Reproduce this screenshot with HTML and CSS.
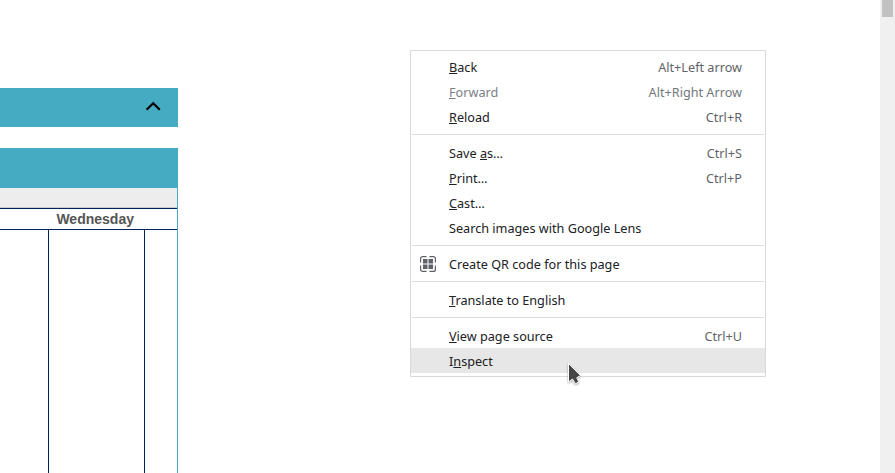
FILE: index.html
```html
<!DOCTYPE html>
<html lang="en">
<head>
<meta charset="utf-8">
<title>Calendar</title>
<link rel="stylesheet" href="styles.css">
</head>
<body>
<main class="page">
  <section class="calendar">
    <div class="filter-bar">
      <svg class="chevron" width="16" height="11" viewBox="0 0 16 11"><path d="M1.6 8.800 8.200 2.200 14.800 8.800" fill="none" stroke="#000" stroke-width="2.2"/></svg>
    </div>
    <div class="title-bar"></div>
    <div class="grid">
      <div class="subhead"></div>
      <div class="day-head"><span class="day">Wednesday</span></div>
      <div class="cells"><div class="cell first"></div><div class="cell mid"></div><div class="cell last"></div></div>
    </div>
  </section>
</main>
<aside class="scrollbar"><div class="thumb"></div></aside>

<nav class="menu">
  <div class="item"><span class="label"><u>B</u>ack</span><span class="key">Alt+Left arrow</span></div>
  <div class="item disabled"><span class="label"><u>F</u>orward</span><span class="key">Alt+Right Arrow</span></div>
  <div class="item"><span class="label"><u>R</u>eload</span><span class="key">Ctrl+R</span></div>
  <div class="sep"></div>
  <div class="item"><span class="label">Save <u>a</u>s…</span><span class="key">Ctrl+S</span></div>
  <div class="item"><span class="label"><u>P</u>rint…</span><span class="key">Ctrl+P</span></div>
  <div class="item"><span class="label"><u>C</u>ast…</span></div>
  <div class="item"><span class="label">Search images with Google Lens</span></div>
  <div class="sep"></div>
  <div class="item">
    <svg class="icon" width="16" height="16" viewBox="0 0 16 16"><path d="M.6 6.500V2.600a2 2 0 0 1 2-2H6.500M9.500 .6h3.900a2 2 0 0 1 2 2V6.500M15.400 9.500v3.900a2 2 0 0 1-2 2H9.500M6.500 15.400H2.600a2 2 0 0 1-2-2V9.500" fill="none" stroke="#5f6368" stroke-width="1.200"/><path d="M3 3h4.500v4.500H3zM8.500 3H13v4.500H8.500zM3 8.500h4.500V13H3zM8.500 8.500H13V13H8.500z" fill="#5f6368"/></svg>
    <span class="label">Create QR code for this page</span>
  </div>
  <div class="sep"></div>
  <div class="item"><span class="label"><u>T</u>ranslate to English</span></div>
  <div class="sep"></div>
  <div class="item"><span class="label"><u>V</u>iew page source</span><span class="key">Ctrl+U</span></div>
  <div class="item active"><span class="label">I<u>n</u>spect</span></div>
</nav>
<svg class="cursor" width="18" height="26" viewBox="0 0 18 26"><path d="M2.500 2.500v18.500l4-3 3 4.800 3.300-1.900-2-4.200 3.700-2.200z" fill="#454545" stroke="#fff" stroke-width="1"/></svg>
</body>
</html>
```
FILE: styles.css
```css
* { box-sizing: border-box; }
body {
  margin: 0;
  height: 473px;
  display: flex;
  overflow: hidden;
  background: #fff;
  font-family: "Noto Sans", sans-serif;
  font-size: 12.67px;
}
.page { flex: 1; }
.calendar {
  width: 178px;
  height: 473px;
  padding-top: 88px;
  display: flex;
  flex-direction: column;
}
.filter-bar {
  height: 39px;
  flex: none;
  margin-bottom: 21px;
  padding: 13px 17px 0 0;
  display: flex;
  justify-content: flex-end;
  align-items: flex-start;
  background: #44abc3;
}
.title-bar { height: 40px; flex: none; background: #44abc3; }
.grid {
  flex: 1;
  display: flex;
  flex-direction: column;
  border-right: 1px solid #44abc3;
}
.subhead { height: 20px; background: #ededed; border-bottom: 1px solid #ccc; }
.day-head {
  height: 22px;
  display: flex;
  border-top: 1px solid #002659;
  border-bottom: 1px solid #002659;
}
.day {
  width: 96px;
  margin-left: 47.2px;
  text-align: center;
  font: bold 14px/20px "Liberation Sans", sans-serif;
  color: #555;
}
.cells { flex: 1; display: flex; }
.first { width: 49px; border-right: 1px solid #002659; }
.mid { width: 96px; border-right: 1px solid #002659; }
.last { flex: 1; }
.scrollbar { width: 15px; padding: 0 2px; background: #f0f0f0; }
.thumb { height: 17px; background: #c1c1c1; }
.menu {
  position: absolute;
  left: 410px;
  top: 50px;
  width: 356px;
  padding: 3px 0;
  border: 1px solid #dadada;
  background: #fff;
  color: #202124;
}
.item {
  position: relative;
  height: 25px;
  padding: 0 23px 0 38px;
  display: flex;
  justify-content: space-between;
  line-height: 27px;
  white-space: nowrap;
}
.item u { text-decoration-thickness: 1px; text-underline-offset: 1px; text-decoration-skip-ink: none; }
.key { color: #5f6368; }
.disabled { color: #7b8085; }
.disabled .key { color: #73777b; }
.active { background: #e7e7e7; }
.sep { height: 1px; margin: 5px 1px; background: #dadce0; }
.icon { position: absolute; left: 9px; top: 5px; }
.cursor {
  position: absolute;
  left: 566px;
  top: 361px;
  filter: drop-shadow(0 1px 1px rgba(0, 0, 0, .35));
}
```
